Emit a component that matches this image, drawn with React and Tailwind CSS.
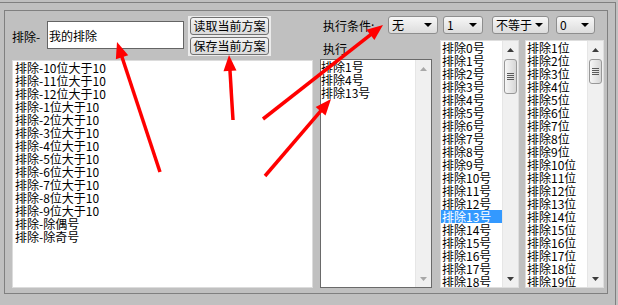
import React from 'react';

const leftItems = [
  '排除-10位大于10', '排除-11位大于10', '排除-12位大于10',
  '排除-1位大于10', '排除-2位大于10', '排除-3位大于10', '排除-4位大于10',
  '排除-5位大于10', '排除-6位大于10', '排除-7位大于10', '排除-8位大于10',
  '排除-9位大于10', '排除-除偶号', '排除-除奇号',
];
const execItems = ['排除1号', '排除4号', '排除13号'];
const numItems = Array.from({ length: 19 }, (_, i) => `排除${i}号`);
const digitItems = Array.from({ length: 19 }, (_, i) => `排除${i + 1}位`);

function Tri({ up, color = '#000', w = 7, h = 4 }) {
  return (
    <svg width={w} height={h} viewBox={`0 0 ${w} ${h}`}>
      <path d={up ? `M0 ${h} L${w / 2} 0 L${w} ${h} Z` : `M0 0 L${w} 0 L${w / 2} ${h} Z`} fill={color} />
    </svg>
  );
}

function Select({ value, className }) {
  return (
    <div className={`flex items-center h-[18px] rounded-[3px] border border-[#8e8e8e] bg-linear-to-b from-[#f7f7f7] to-[#dcdcdc] pl-[3px] pr-[5px] ${className}`}>
      <span className="flex-1 leading-[16px]">{value}</span>
      <Tri w={8} h={4} />
    </div>
  );
}

function ScrollBar({ thumb, arrow }) {
  return (
    <div className="flex flex-col w-[16px] shrink-0 bg-[#f0f0f0] border-l border-[#e6e6e6]">
      <div className="h-[17px] flex items-center justify-center">
        <Tri up color={arrow} />
      </div>
      {thumb && (
        <div className={`mx-[1px] mt-[1px] rounded-[3px] border border-[#989898] bg-linear-to-r from-[#f6f6f6] to-[#d6d6d6] flex flex-col items-center justify-center gap-[1px] ${thumb}`}>
          <div className="w-[7px] h-[1px] bg-[#5a5a5a]" />
          <div className="w-[7px] h-[1px] bg-[#5a5a5a]" />
          <div className="w-[7px] h-[1px] bg-[#5a5a5a]" />
          <div className="w-[7px] h-[1px] bg-[#5a5a5a]" />
        </div>
      )}
      <div className="mt-auto h-[17px] flex items-center justify-center">
        <Tri color={arrow} />
      </div>
    </div>
  );
}

function Arrow({ x1, y1, x2, y2 }) {
  const dx = x2 - x1;
  const dy = y2 - y1;
  const len = Math.hypot(dx, dy);
  const ux = dx / len;
  const uy = dy / len;
  const hl = 16;
  const hw = 6.5;
  const bx = x2 - ux * hl;
  const by = y2 - uy * hl;
  const pts = [
    [x2, y2],
    [bx - uy * hw, by + ux * hw],
    [bx + uy * hw, by - ux * hw],
  ];
  return (
    <g>
      <line x1={x1} y1={y1} x2={bx + ux * 2} y2={by + uy * 2} stroke="#ff0000" strokeWidth="3.5" />
      <polygon points={pts.map((p) => p.join(',')).join(' ')} fill="#ff0000" />
    </g>
  );
}

export default function App() {
  return (
    <div className="relative w-[618px] h-[305px] overflow-hidden bg-[#c0c0c0] text-[12px] leading-[13px] text-black antialiased font-['Noto_Sans_CJK_SC','Liberation_Sans',sans-serif]">
      <div className="mt-[2px] w-[616px] h-[303px] border-t border-r border-[#808080]">
        {/* group box */}
        <div className="ml-[4px] mt-[7px] w-[604px] h-[284px] border border-[#808080] flex pl-[7px] pt-[5px] gap-[7px]">
          {/* left side */}
          <div className="w-[301px] flex flex-col">
            <div className="flex items-start h-[40px]">
              <span className="w-[35px] mt-[14px] whitespace-nowrap">排除-</span>
              <div className="w-[137px] h-[28px] mt-[5px] border border-[#646464] bg-white flex items-center pl-[1px]">
                我的排除
              </div>
              <div className="ml-[4px] px-[2px] py-[1px] bg-[#ebebeb] flex flex-col gap-[2px]">
                <button className="w-[79px] h-[18px] rounded-[3px] border border-[#707070] bg-linear-to-b from-[#f4f4f4] to-[#dadada] leading-[16px] flex items-center justify-center">
                  读取当前方案
                </button>
                <button className="w-[79px] h-[18px] rounded-[3px] border border-[#707070] bg-linear-to-b from-[#f4f4f4] to-[#dadada] leading-[16px] flex items-center justify-center">
                  保存当前方案
                </button>
              </div>
            </div>
            <div className="mt-[4px] h-[228px] bg-white border border-[#dcdcdc] pl-[2px] overflow-hidden">
              {leftItems.map((t) => (
                <div key={t} className="whitespace-nowrap">{t}</div>
              ))}
            </div>
          </div>

          {/* right side */}
          <div className="w-[284px] flex flex-col">
            <div className="flex items-center h-[18px]">
              <span className="w-[68px] pl-[3px] whitespace-nowrap">执行条件:</span>
              <Select value="无" className="w-[50px]" />
              <Select value="1" className="w-[40px] ml-[5px]" />
              <Select value="不等于" className="w-[57px] ml-[9px]" />
              <Select value="0" className="w-[39px] ml-[7px]" />
            </div>
            <div className="mt-[6px] flex h-[248px]">
              <div className="w-[112px] flex flex-col">
                <div className="h-[19px] pl-[3px] pt-[2px]">执行</div>
                <div className="flex-1 flex bg-white border border-[#6a6a6a] overflow-hidden">
                  <div className="flex-1 overflow-hidden">
                    {execItems.map((t) => (
                      <div key={t} className="whitespace-nowrap">{t}</div>
                    ))}
                  </div>
                  <ScrollBar arrow="#a8a8a8" />
                </div>
              </div>
              <div className="ml-[8px] w-[79px] flex bg-white border border-[#dedede] overflow-hidden">
                <div className="flex-1 overflow-hidden">
                  {numItems.map((t, i) => (
                    <div
                      key={t}
                      className={i === 13 ? 'whitespace-nowrap pl-[1px] bg-[#3399ff] text-white' : 'whitespace-nowrap pl-[1px]'}
                    >
                      {t}
                    </div>
                  ))}
                </div>
                <ScrollBar arrow="#3c3c3c" thumb="h-[35px]" />
              </div>
              <div className="ml-[6px] w-[79px] flex bg-white border border-[#dedede] overflow-hidden">
                <div className="flex-1 overflow-hidden pl-[1px]">
                  {digitItems.map((t) => (
                    <div key={t} className="whitespace-nowrap">{t}</div>
                  ))}
                </div>
                <ScrollBar arrow="#3c3c3c" thumb="h-[25px]" />
              </div>
            </div>
          </div>
        </div>
      </div>

      {/* red annotation arrows */}
      <svg className="absolute inset-0 pointer-events-none" width="618" height="305">
        <Arrow x1={160} y1={172} x2={117} y2={42} />
        <Arrow x1={233} y1={120} x2={229} y2={55} />
        <Arrow x1={263} y1={119} x2={383} y2={25} />
        <Arrow x1={265} y1={176} x2={331} y2={99} />
      </svg>
    </div>
  );
}
